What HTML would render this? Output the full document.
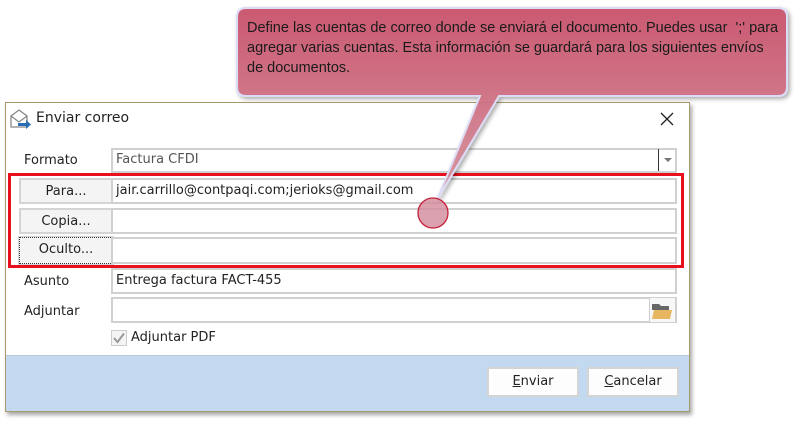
<!DOCTYPE html>
<html><head><meta charset="utf-8"><style>
body{margin:0;width:798px;height:421px;background:#fff;position:relative;overflow:hidden;font-family:"DejaVu Sans","Liberation Sans",sans-serif;font-size:13px;color:#222}
.a{position:absolute;box-sizing:border-box}
.dlg{left:5px;top:102px;width:685px;height:310px;border:1px solid #a89a6c;background:#fff;box-shadow:2px 3px 4px rgba(0,0,0,.35)}
.inp{border:2px solid #d0d0d0;background:#fff}
.btn{border:2px solid #d4d4d4;background:#f4f4f4;text-align:center;line-height:23px}
.lbl{font-size:13px}
</style></head><body>
<div class="a dlg"></div>
<svg class="a" style="left:9px;top:108px" width="24" height="22" viewBox="0 0 24 22"><path d="M2 8 L10 2 L18 8 V19 H2 Z" fill="#fff" stroke="#888" stroke-width="1.3"/><path d="M2 8 L10 14 L18 8" fill="none" stroke="#888" stroke-width="1.2"/><path d="M9 15 H17 V12 L22 16.5 L17 21 V18 H9 Z" fill="#2a6db5"/></svg>
<div class="a" style="left:36px;top:110px;font-size:14px">Enviar correo</div>
<svg class="a" style="left:660px;top:112px" width="14" height="14"><path d="M1 1L13 13M13 1L1 13" stroke="#222" stroke-width="1.3"/></svg>
<div class="a lbl" style="left:24px;top:153px">Formato</div>
<div class="a inp" style="left:111px;top:148px;width:566px;height:25px"></div>
<div class="a" style="left:116px;top:152px;color:#555">Factura CFDI</div>
<div class="a" style="left:658px;top:149px;width:1px;height:22px;background:#333"></div>
<div class="a" style="left:664px;top:158px;width:0;height:0;border-left:4px solid transparent;border-right:4px solid transparent;border-top:4px solid #777"></div>
<div class="a btn" style="left:19px;top:178px;width:94px;height:26px">Para...</div>
<div class="a inp" style="left:111px;top:178px;width:566px;height:26px"></div>
<div class="a" style="left:116px;top:183px">jair.carrillo@contpaqi.com;jerioks@gmail.com</div>
<div class="a btn" style="left:19px;top:208px;width:94px;height:26px">Copia...</div>
<div class="a inp" style="left:111px;top:208px;width:566px;height:26px"></div>
<div class="a btn" style="left:19px;top:237px;width:94px;height:27px;border:1px dotted #333;outline:1px solid #d4d4d4">Oculto...</div>
<div class="a inp" style="left:111px;top:237px;width:566px;height:27px"></div>
<div class="a" style="left:8px;top:173px;width:676px;height:95px;border:3px solid #e8101e"></div>
<div class="a lbl" style="left:24px;top:274px">Asunto</div>
<div class="a inp" style="left:111px;top:268px;width:566px;height:26px"></div>
<div class="a" style="left:116px;top:273px">Entrega factura FACT-455</div>
<div class="a lbl" style="left:24px;top:304px">Adjuntar</div>
<div class="a inp" style="left:111px;top:297px;width:566px;height:26px"></div>
<div class="a" style="left:649px;top:298px;width:26px;height:24px;border-left:1px solid #ccc;background:#f7f7f7"></div>
<svg class="a" style="left:651px;top:302px" width="22" height="18"><path d="M1 2H8L10 4H18V8H1Z" fill="#666"/><path d="M3 8H21L19 17H1Z" fill="#e8b560"/></svg>
<div class="a" style="left:111px;top:330px;width:16px;height:16px;border:1px solid #ccc;background:#f4f4f4"></div>
<svg class="a" style="left:113px;top:332px" width="12" height="12"><path d="M1 6L4.5 10L11 1.5" stroke="#999" stroke-width="2" fill="none"/></svg>
<div class="a" style="left:131px;top:330px">Adjuntar PDF</div>
<div class="a" style="left:6px;top:355px;width:683px;height:56px;background:#c3d9ef;border-top:1px solid #b8c8d8"></div>
<div class="a btn" style="left:487px;top:367px;width:92px;height:30px;line-height:26px;background:#fdfdfd"><u>E</u>nviar</div>
<div class="a btn" style="left:587px;top:367px;width:92px;height:30px;line-height:26px;background:#fdfdfd"><u>C</u>ancelar</div>
<svg class="a" style="left:0;top:0" width="798" height="421">
<defs><linearGradient id="g" x1="0" y1="0" x2="0" y2="1"><stop offset="0" stop-color="#c9506a"/><stop offset="1" stop-color="#d6949f"/></linearGradient>
<filter id="s"><feDropShadow dx="2" dy="2" stdDeviation="2" flood-opacity=".35"/></filter></defs>
<path d="M246 8 H778 Q787 8 787 17 V87 Q787 96 778 96 H499 L437 200 L480 96 H246 Q237 96 237 87 V17 Q237 8 246 8 Z" fill="url(#g)" fill-opacity=".92" stroke="#dcdcf6" stroke-width="2" filter="url(#s)"/>
<circle cx="433" cy="213" r="15" fill="#d38a9a" fill-opacity=".8" stroke="#c4203c" stroke-width="1.3"/>
</svg>
<div class="a" style="left:247px;top:18px;font-family:'Liberation Sans',sans-serif;font-size:14.5px;line-height:20px;color:#1a1a1a;width:545px;white-space:nowrap">Define las cuentas de correo donde se enviará el documento. Puedes usar &nbsp;';' para<br>agregar varias cuentas. Esta información se guardará para los siguientes envíos<br>de documentos.</div>
</body></html>
